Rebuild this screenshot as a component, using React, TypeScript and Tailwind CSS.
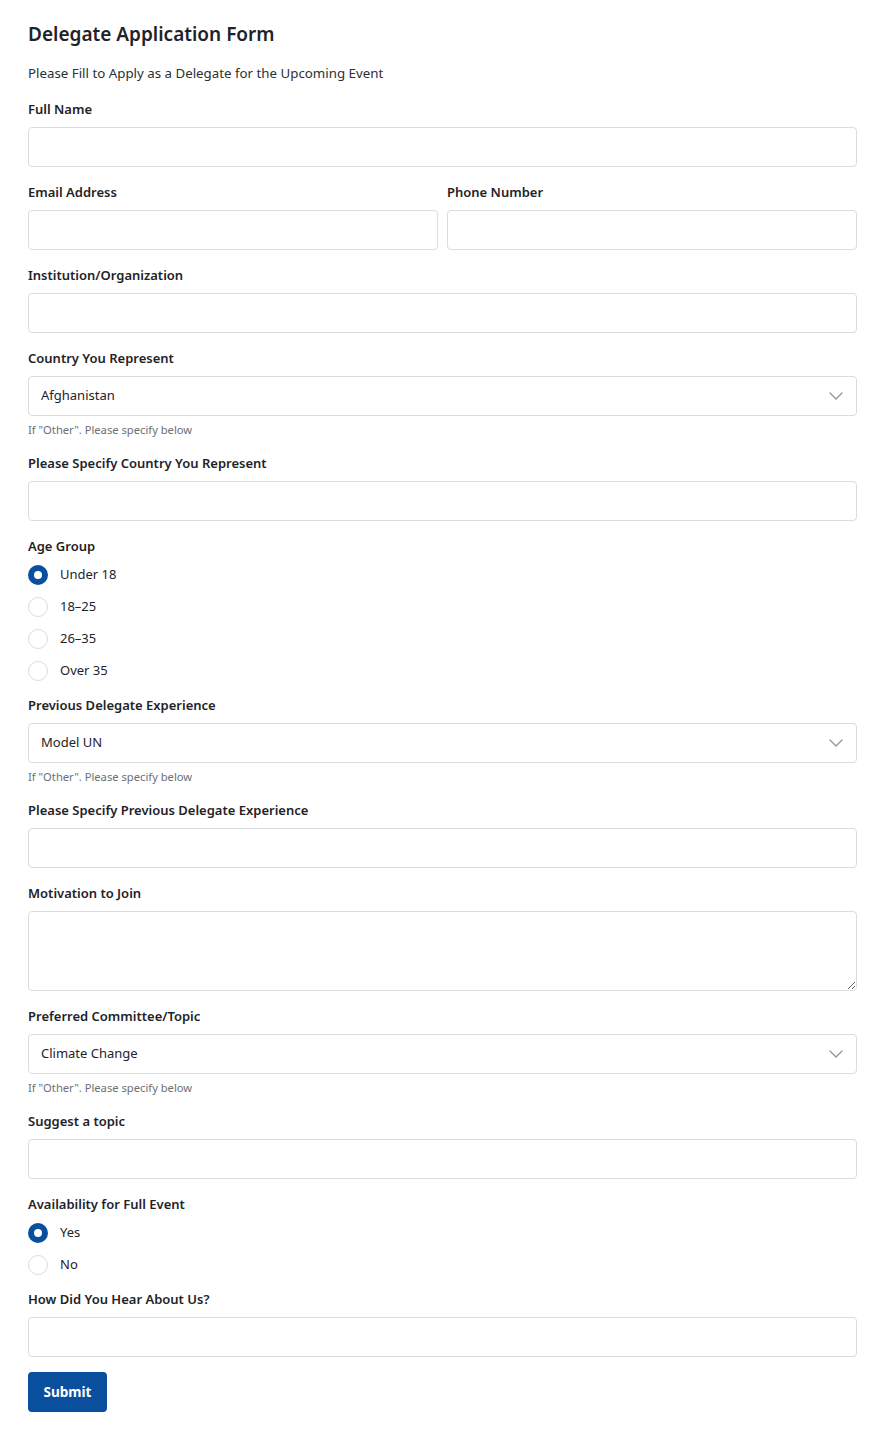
import { ChevronDown } from 'lucide-react'

const font = { fontFamily: '"Noto Sans", "Open Sans", sans-serif' }

function Label({ children }: { children: React.ReactNode }) {
  return <label className="mb-2 block text-[13px] leading-[19px] font-semibold text-[#1e2328]">{children}</label>
}

function TextField({ label, last = false }: { label: string; last?: boolean }) {
  return (
    <div className={last ? 'mb-[15px]' : 'mb-4'}>
      <Label>{label}</Label>
      <input
        type="text"
        className="block h-10 w-full rounded-[4px] border border-[#dadcde] bg-white px-3 text-[13px] outline-none"
      />
    </div>
  )
}

function SelectField({ label, value }: { label: string; value: string }) {
  return (
    <div className="mb-4">
      <Label>{label}</Label>
      <div className="relative">
        <select
          defaultValue={value}
          className="block h-10 w-full appearance-none rounded-[4px] border border-[#dadcde] bg-white pr-8 pl-3 text-[13px] text-[#1e2328] outline-none"
        >
          <option>{value}</option>
          <option>Other</option>
        </select>
        <ChevronDown
          className="pointer-events-none absolute top-1/2 right-[9px] h-6 w-6 -translate-y-1/2 text-[#8f9499]"
          strokeWidth={1.3}
        />
      </div>
      <p className="mt-[6px] text-[11.2px] leading-4 text-[#6b7075]">If "Other". Please specify below</p>
    </div>
  )
}

function RadioGroup({ label, name, options }: { label: string; name: string; options: string[] }) {
  return (
    <div className="mb-[13px]">
      <div className="mb-[7px] text-[13px] leading-[19px] font-semibold text-[#1e2328]">{label}</div>
      <div className="flex flex-col gap-2">
        {options.map((opt, i) => (
          <label key={opt} className="flex h-6 items-center gap-3 text-[13px] text-[#1e2328]">
            <input
              type="radio"
              name={name}
              defaultChecked={i === 0}
              className="h-5 w-5 shrink-0 appearance-none rounded-full border border-[#dadcde] bg-white checked:border-[6px] checked:border-[#0a4f9e]"
            />
            {opt}
          </label>
        ))}
      </div>
    </div>
  )
}

export default function App() {
  return (
    <div className="min-h-screen bg-white pt-5 pr-3 pb-6 pl-7" style={font}>
      <h1 className="mb-[15px] text-[19px] leading-7 font-semibold text-[#1e2328]">Delegate Application Form</h1>
      <p className="mb-[17px] text-[13.3px] leading-5 text-[#2b3035]">Please Fill to Apply as a Delegate for the Upcoming Event</p>

      <TextField label="Full Name" />
      <div className="grid grid-cols-2 gap-[9px]">
        <TextField label="Email Address" />
        <TextField label="Phone Number" />
      </div>
      <TextField label="Institution/Organization" />
      <SelectField label="Country You Represent" value="Afghanistan" />
      <TextField label="Please Specify Country You Represent" />
      <RadioGroup label="Age Group" name="age" options={['Under 18', '18–25', '26–35', 'Over 35']} />
      <SelectField label="Previous Delegate Experience" value="Model UN" />
      <TextField label="Please Specify Previous Delegate Experience" />
      <div className="mb-4">
        <Label>Motivation to Join</Label>
        <textarea className="block h-20 w-full rounded-[4px] border border-[#dadcde] bg-white px-3 py-2 text-[13px] outline-none" />
      </div>
      <SelectField label="Preferred Committee/Topic" value="Climate Change" />
      <TextField label="Suggest a topic" />
      <RadioGroup label="Availability for Full Event" name="avail" options={['Yes', 'No']} />
      <TextField label="How Did You Hear About Us?" last />
      <button
        type="button"
        className="flex h-10 w-[79px] items-center justify-center rounded-[4px] bg-[#0a4f9e] text-[13.5px] font-bold text-white"
      >
        Submit
      </button>
    </div>
  )
}
